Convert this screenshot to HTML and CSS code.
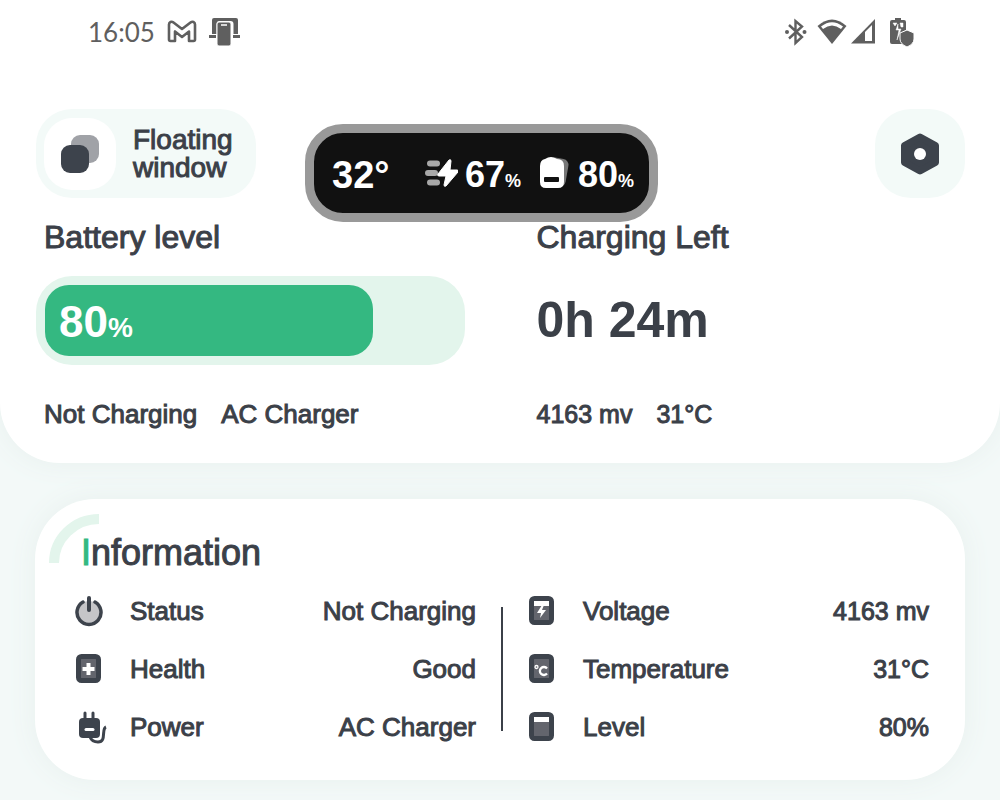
FILE: index.html
```html
<!DOCTYPE html>
<html lang="en">
<head>
<meta charset="utf-8">
<meta name="viewport" content="width=device-width, initial-scale=1">
<title>Battery</title>
<link rel="stylesheet" href="styles.css">
</head>
<body>
<section class="summary">
  <div class="statusbar">
    <div class="status-group">
      <time class="clock">16:05</time>
      <svg class="status-mail" width="30" height="24" viewBox="0 0 30 24"><path d="M2 19.500V4.500c0-2.500 2.500-3.500 4.500-2L15 9l8.500-6.500c2-1.500 4.500-.5 4.500 2v15q0 1.500-1.500 1.500H22V11.500L15 17l-7-5.500V21H3.500Q2 21 2 19.500z" fill="none" stroke="#5f5f5f" stroke-width="2.600" stroke-linejoin="round"/></svg>
      <svg width="32" height="30" viewBox="0 0 32 30"><path d="M3 17V3q0-2 2-2h22q2 0 2 2v14h-4.500V7q0-3-3-3h-11q-3 0-3 3v10z" fill="#5f5f5f"/><path d="M0 18h7v3H0zM24 18h7v3h-7z" fill="#5f5f5f"/><rect x="8" y="5" width="14" height="24" rx="2" fill="#5f5f5f" stroke="#fff"/><path d="M12 8h6" stroke="#fff" stroke-width="1.500"/></svg>
    </div>
    <div class="status-group status-right">
      <svg width="24" height="28" viewBox="0 0 24 28"><path d="M5 7l13 12-6.500 6V3L18 8.500 5 20.500" fill="none" stroke="#5f5f5f" stroke-width="2.400"/><circle cx="3" cy="14" r="2" fill="#5f5f5f"/><circle cx="20.500" cy="14" r="2" fill="#5f5f5f"/></svg>
      <svg class="status-wifi" width="30" height="28" viewBox="0 0 30 28"><path d="M.5 8Q15-5 29.500 8L15 26z" fill="#5f5f5f"/><path d="M4 8.500Q15 0 26 8.500L24 11Q15 4 6 11z" fill="#fff"/></svg>
      <svg class="status-cell" width="26" height="28" viewBox="0 0 26 28"><path d="M1 25.500L25 1v24.500z" fill="#5f5f5f"/><path d="M15 14l7-7v16h-7z" fill="#fff"/></svg>
      <svg width="26" height="30" viewBox="0 0 26 30"><path d="M1 5q0-2 2-2h3V1h6v2h3q2 0 2 2v8l-5 3v6l1 5H3q-2 0-2-2z" fill="#5f5f5f"/><path d="M4 6h4L6 9zM11 6h3v4h-2zM9 7L7 13h3l-2 10 4-11H9z" fill="#fff" stroke="#fff" stroke-width=".5"/><path d="M18 13l7 3v6q0 5-7 8-7-3-7-8v-6z" fill="#5f5f5f" stroke="#fff" stroke-width="1"/></svg>
    </div>
  </div>

  <div class="toolbar">
    <button class="float-button" type="button">
      <span class="float-icon"><svg width="40" height="40" viewBox="0 0 40 40"><rect x="11" y="1" width="28" height="28" rx="9" fill="#a0a2a7"/><rect x="1" y="11" width="28" height="28" rx="9" fill="#3d434c"/></svg></span>
      <span class="float-label">Floating<br>window</span>
    </button>
    <button class="settings-button" type="button" aria-label="Settings">
      <svg width="40" height="42" viewBox="0 0 40 42"><path d="M20 4L35.500 12.500v17L20 38 4.500 29.500v-17z" fill="#3d434c" stroke="#3d434c" stroke-width="7" stroke-linejoin="round"/><circle cx="20" cy="21" r="6" fill="#fff"/></svg>
    </button>
  </div>

  <div class="overview">
    <div class="panel">
      <h2 class="panel-title inset">Battery level</h2>
      <div class="battery"><div class="battery-fill" style="width: 80%"><span class="battery-value">80<span class="battery-unit">%</span></span></div></div>
      <p class="details inset"><span>Not Charging</span><span>AC Charger</span></p>
    </div>
    <div class="panel panel-time">
      <h2 class="panel-title">Charging Left</h2>
      <div class="time-left">0h 24m</div>
      <p class="details numeric"><span>4163 mv</span><span>31°C</span></p>
    </div>
  </div>

  <div class="overlay">
    <span class="overlay-temp">32°</span>
    <span class="overlay-item overlay-charge">
      <svg width="34" height="30" viewBox="0 0 34 30"><path d="M6 5.500h7M4 15h7M6 24.500h7" stroke="#a8a8a8" stroke-width="6" stroke-linecap="round"/><path d="M25 2L14 16q-1 2 1 2h7l-2 9q0 2 2 1l12-14q1-2-1-2h-7l1-9q0-2-2-1z" fill="#fff" stroke="#fff" stroke-width="1"/></svg>
      <span class="overlay-value">67<small>%</small></span>
    </span>
    <span class="overlay-item overlay-level">
      <svg width="33" height="34" viewBox="0 0 33 34"><rect x="10" y="2" width="19" height="28" rx="6" transform="rotate(10 19 17)" fill="#777"/><path d="M7 3Q13-1 19 3q7 0 7 7v16q0 6-6 6H8q-6 0-6-6V10q0-6 5-7z" fill="#fff"/><rect x="6" y="21" width="15" height="5" rx="1" fill="#111"/></svg>
      <span class="overlay-value">80<small>%</small></span>
    </span>
  </div>
</section>

<section class="info">
  <svg class="info-arc" width="50" height="50" viewBox="0 0 50 50"><path d="M5 49A45 44 0 0 1 50 5" fill="none" stroke="#e3f5ec" stroke-width="10"/></svg>
  <h2 class="info-title"><span class="accent">I</span>nformation</h2>
  <div class="info-grid">
    <dl class="info-list">
      <div class="info-row">
        <svg width="28" height="32" viewBox="0 0 28 32"><circle cx="14" cy="17" r="11" fill="#c5c5c8"/><path d="M8 7A12 12 0 1 0 20 7" fill="none" stroke="#3d434c" stroke-width="3.500" stroke-linecap="round"/><path d="M14 3v12" stroke="#3d434c" stroke-width="4" stroke-linecap="round"/></svg>
        <dt>Status</dt><dd>Not Charging</dd>
      </div>
      <div class="info-row">
        <svg width="28" height="32" viewBox="0 0 28 32"><rect x="3.500" y="3.500" width="20" height="24" rx="3" fill="#63656d" stroke="#3d434c" stroke-width="5"/><path d="M13.500 10v12M7.500 16h12" stroke="#fff" stroke-width="4"/></svg>
        <dt>Health</dt><dd>Good</dd>
      </div>
      <div class="info-row">
        <svg width="32" height="34" viewBox="0 0 32 34"><path d="M10 3v6M18 3v6" stroke="#3d434c" stroke-width="3" stroke-linecap="round"/><rect x="4" y="8" width="21" height="20" rx="4" fill="#3d434c"/><path d="M11 19.500h7" stroke="#fff" stroke-width="3" stroke-linecap="round"/><path d="M15 27q2 5 8 5c9 0 3-13 8-15" fill="none" stroke="#3d434c" stroke-width="3"/></svg>
        <dt>Power</dt><dd>AC Charger</dd>
      </div>
    </dl>
    <div class="divider"></div>
    <dl class="info-list">
      <div class="info-row">
        <svg width="28" height="32" viewBox="0 0 28 32"><rect x="3.500" y="3.500" width="20" height="24" rx="3" fill="#63656d" stroke="#3d434c" stroke-width="5"/><path d="M6 6h15v5H6z" fill="#fff"/><path d="M14 10l-5 8h4l-1 5 6-8h-4l2-5z" fill="#fff"/></svg>
        <dt>Voltage</dt><dd class="numeric">4163 mv</dd>
      </div>
      <div class="info-row">
        <svg width="28" height="32" viewBox="0 0 28 32"><rect x="3.500" y="3.500" width="20" height="24" rx="3" fill="#63656d" stroke="#3d434c" stroke-width="5"/><circle cx="8.500" cy="14" r="1.500" fill="none" stroke="#fff" stroke-width="1.300"/><path d="M19 15.500a4 4 0 1 0 0 5" fill="none" stroke="#fff" stroke-width="2.300"/></svg>
        <dt>Temperature</dt><dd class="numeric">31°C</dd>
      </div>
      <div class="info-row">
        <svg width="28" height="32" viewBox="0 0 28 32"><rect x="3.500" y="3.500" width="20" height="24" rx="3" fill="#63656d" stroke="#3d434c" stroke-width="5"/><path d="M6 6h15v5H6z" fill="#fff"/></svg>
        <dt>Level</dt><dd class="numeric">80%</dd>
      </div>
    </dl>
  </div>
</section>
</body>
</html>
```
FILE: styles.css
```css
* { box-sizing: border-box; }

body {
  margin: 0;
  min-height: 100vh;
  background: #f3f9f8;
  color: #3b4048;
  font-family: "Liberation Sans", Arial, sans-serif;
  font-size: 26px;
  line-height: 32px;
  -webkit-text-stroke: 1px currentColor;
}

h2, p, dl, dd { margin: 0; }
svg { display: block; flex: none; }

button {
  border: 0;
  padding: 0;
  font: inherit;
  color: inherit;
  -webkit-text-stroke: inherit;
}

.summary {
  position: relative;
  background: #fff;
  border-radius: 0 0 60px 60px;
  padding: 0 35px 33px 36px;
  box-shadow: 0 0 28px #e8f0ee;
}

.statusbar {
  display: flex;
  justify-content: space-between;
  align-items: center;
  height: 64px;
  padding: 0 50px 0 52px;
  color: #5f5f5f;
}
.status-group { display: flex; align-items: center; gap: 12px; }
.status-right { gap: 9px; }
.status-cell { margin: 0 4px 0 -6px; }
.clock { font-family: Lato, sans-serif; font-size: 26px; -webkit-text-stroke: 0; }

.toolbar {
  display: flex;
  justify-content: space-between;
  margin-top: 45px;
}
.float-button {
  display: flex;
  align-items: center;
  gap: 17px;
  height: 89px;
  padding: 0 23px 0 8px;
  border-radius: 36px;
  background: #f3faf8;
  text-align: left;
}
.float-icon {
  display: grid;
  place-items: center;
  width: 72px;
  height: 72px;
  border-radius: 28px;
  background: #fff;
}
.float-label { font-size: 28px; line-height: 28px; }
.settings-button {
  display: grid;
  place-items: center;
  width: 90px;
  height: 89px;
  border-radius: 36px;
  background: #f3faf8;
}

.overview {
  display: grid;
  grid-template-columns: 1fr 1fr;
  margin-top: 20px;
}
.panel { padding-right: 36px; }
.panel-time { padding: 0 0 0 36px; }
.panel-title { font-size: 32px; line-height: 38px; font-weight: 400; }
.inset { padding-left: 8px; }
.battery {
  margin-top: 20px;
  height: 89px;
  padding: 9px;
  border-radius: 36px;
  background: #e3f5ec;
}
.battery-fill {
  display: flex;
  align-items: center;
  height: 100%;
  padding: 8px 0 0 14px;
  border-radius: 24px;
  background: #34b881;
  color: #fff;
}
.battery-value { font-size: 44px; font-weight: 700; -webkit-text-stroke: 0; }
.battery-unit { font-size: 28px; }
.time-left {
  margin-top: 20px;
  height: 89px;
  font-size: 50px;
  line-height: 89px;
  font-weight: 700;
  -webkit-text-stroke: 0;
}
.details { display: flex; gap: 24px; margin-top: 33px; }
.numeric { font-size: 25px; }

.overlay {
  position: absolute;
  left: 305px;
  top: 124px;
  display: flex;
  align-items: center;
  width: 353px;
  height: 98px;
  padding: 0 0 0 18px;
  border: 9px solid #999;
  border-radius: 38px;
  background: #111;
  color: #fff;
  font-weight: 700;
  -webkit-text-stroke: 0;
}
.overlay-temp { font-size: 38px; width: 92px; padding-top: 4px; }
.overlay-item { display: flex; align-items: center; gap: 7px; }
.overlay-charge { margin-right: 17px; }
.overlay-value { font-size: 36px; padding-top: 10px; }
.overlay-value small { font-size: 18px; }

.info {
  position: relative;
  margin: 36px 35px 18px;
  padding: 34px 36px 24px 40px;
  border-radius: 60px;
  background: #fff;
  box-shadow: 0 0 28px #e8f0ee;
}
.info-arc { position: absolute; left: 14px; top: 15px; }
.info-title {
  padding-left: 6px;
  font-size: 36px;
  line-height: 40px;
  font-weight: 400;
}
.accent { color: #34b881; }
.info-grid {
  display: grid;
  grid-template-columns: 1fr 2px 1fr;
  column-gap: 25px;
  margin-top: 9px;
}
.info-row {
  display: grid;
  grid-template-columns: 28px auto 1fr;
  column-gap: 27px;
  align-items: center;
  height: 58px;
}
.info-row dd { text-align: right; }
.divider { margin: 25px 0; background: #3b4048; }
```
